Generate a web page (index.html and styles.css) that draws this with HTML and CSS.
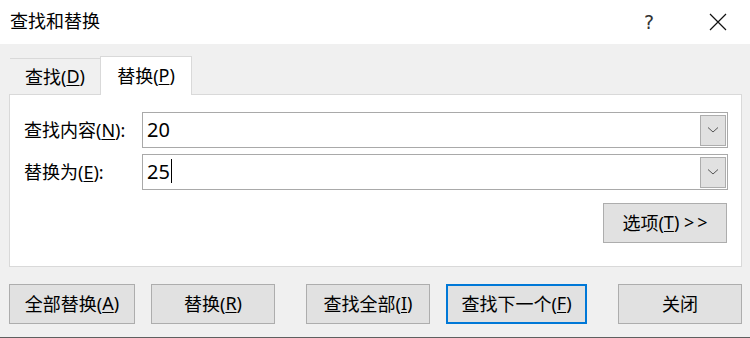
FILE: index.html
```html
<!DOCTYPE html>
<html lang="zh-CN">
<head>
<meta charset="utf-8">
<title>查找和替换</title>
<link rel="stylesheet" href="styles.css">
</head>
<body>
<div class="dialog">
  <div class="titlebar">
    <span class="title">查找和替换</span>
    <span class="help">?</span>
    <span class="close">
      <svg width="18" height="18" viewBox="0 0 18 18"><path d="M1 1 L17 17 M17 1 L1 17" stroke="#111" stroke-width="1.2" fill="none"/></svg>
    </span>
  </div>
  <div class="content">
    <div class="tabs">
      <div class="tab">查找(<u>D</u>)</div>
      <div class="tab active">替换(<u>P</u>)</div>
    </div>
    <div class="panel">
      <div class="row first">
        <label class="label">查找内容(<u>N</u>):</label>
        <div class="combo">
          <span class="value">20</span>
          <span class="drop"><svg width="12" height="8" viewBox="0 0 12 8"><path d="M1 1.5 L6 6 L11 1.5" stroke="#555" stroke-width="1" fill="none"/></svg></span>
        </div>
      </div>
      <div class="row">
        <label class="label">替换为(<u>E</u>):</label>
        <div class="combo">
          <span class="value">25<span class="caret"></span></span>
          <span class="drop"><svg width="12" height="8" viewBox="0 0 12 8"><path d="M1 1.5 L6 6 L11 1.5" stroke="#555" stroke-width="1" fill="none"/></svg></span>
        </div>
      </div>
      <div class="options-row">
        <button class="btn options">选项(<u>T</u>) &gt;&#8201;&gt;</button>
      </div>
    </div>
    <div class="buttons">
      <button class="btn b1">全部替换(<u>A</u>)</button>
      <button class="btn b2">替换(<u>R</u>)</button>
      <button class="btn b3">查找全部(<u>I</u>)</button>
      <button class="btn b4 focus">查找下一个(<u>F</u>)</button>
      <button class="btn b5">关闭</button>
    </div>
  </div>
</div>
</body>
</html>
```
FILE: styles.css
```css
* { box-sizing: border-box; }
html, body {
  margin: 0;
  padding: 0;
  width: 750px;
  height: 338px;
  overflow: hidden;
  background: #f0f0f0;
}
body {
  font-family: "Noto Sans", "Noto Sans CJK SC", sans-serif;
  font-size: 18px;
  color: #000;
}
u { text-decoration-thickness: 1px; text-underline-offset: 2px; }
.dialog {
  width: 750px;
  height: 338px;
  display: flex;
  flex-direction: column;
  border-bottom: 1px solid #5f5f5f;
}
.titlebar {
  height: 44px;
  background: #fff;
  display: flex;
  align-items: center;
  padding-left: 10px;
  flex: none;
}
.title { flex: 1; line-height: 1; padding-bottom: 2px; }
.help {
  width: 20px;
  text-align: center;
  font-family: "DejaVu Sans", sans-serif;
  font-size: 19px;
  color: #333;
  margin-right: 50px;
  padding-bottom: 1px;
}
.close {
  width: 18px;
  height: 18px;
  margin-right: 23px;
  display: flex;
}
.content {
  flex: 1;
  display: flex;
  flex-direction: column;
  background: #f0f0f0;
}
.tabs {
  height: 50px;
  display: flex;
  align-items: flex-end;
  padding-left: 10px;
  flex: none;
}
.tab {
  width: 90px;
  height: 36px;
  border-top: 1px solid #d9d9d9;
  display: flex;
  align-items: center;
  justify-content: center;
  padding-bottom: 2px;
}
.tab.active {
  width: 92px;
  height: 39px;
  background: #fff;
  border: 1px solid #d9d9d9;
  border-bottom: none;
  margin-bottom: -1px;
  position: relative;
  z-index: 1;
  padding-bottom: 3px;
}
.panel {
  margin-left: 9px;
  width: 733px;
  height: 173px;
  background: #fff;
  border: 1px solid #d9d9d9;
  padding: 17px 13px 0 14px;
  flex: none;
}
.row {
  display: flex;
  align-items: center;
  height: 36px;
  margin-bottom: 6px;
}
.label {
  width: 118px;
  flex: none;
  padding-bottom: 2px;
}
.combo {
  flex: 1;
  height: 36px;
  border: 1px solid #a9a9a9;
  display: flex;
  align-items: center;
  justify-content: space-between;
  padding: 0 1px 0 4px;
}
.value {
  font-family: "Noto Sans", "Open Sans", sans-serif;
  font-size: 20px;
  display: flex;
  align-items: center;
  padding-bottom: 2px;
}
.caret {
  display: inline-block;
  width: 1px;
  height: 24px;
  background: #000;
  margin-left: 1px;
}
.drop {
  width: 26px;
  height: 31px;
  background: #e1e1e1;
  border: 1px solid #adadad;
  display: flex;
  align-items: center;
  justify-content: center;
}
.options-row {
  display: flex;
  justify-content: flex-end;
  margin-top: 13px;
}
.btn {
  font-family: "Noto Sans", "Noto Sans CJK SC", sans-serif;
  font-size: 18px;
  color: #000;
  background: #e1e1e1;
  border: 1px solid #adadad;
  height: 40px;
  padding: 0 0 2px 0;
  margin: 0;
  display: flex;
  align-items: center;
  justify-content: center;
  flex: none;
}
.options { width: 124px; margin-right: 1px; }
.buttons {
  display: flex;
  padding-left: 9px;
  margin-top: 17px;
}
.b1 { width: 126px; }
.b2 { width: 124px; margin-left: 16px; }
.b3 { width: 124px; margin-left: 31px; }
.b4 { width: 141px; margin-left: 16px; }
.b5 { width: 124px; margin-left: 31px; }
.focus { border: 2px solid #0078d7; }
```
